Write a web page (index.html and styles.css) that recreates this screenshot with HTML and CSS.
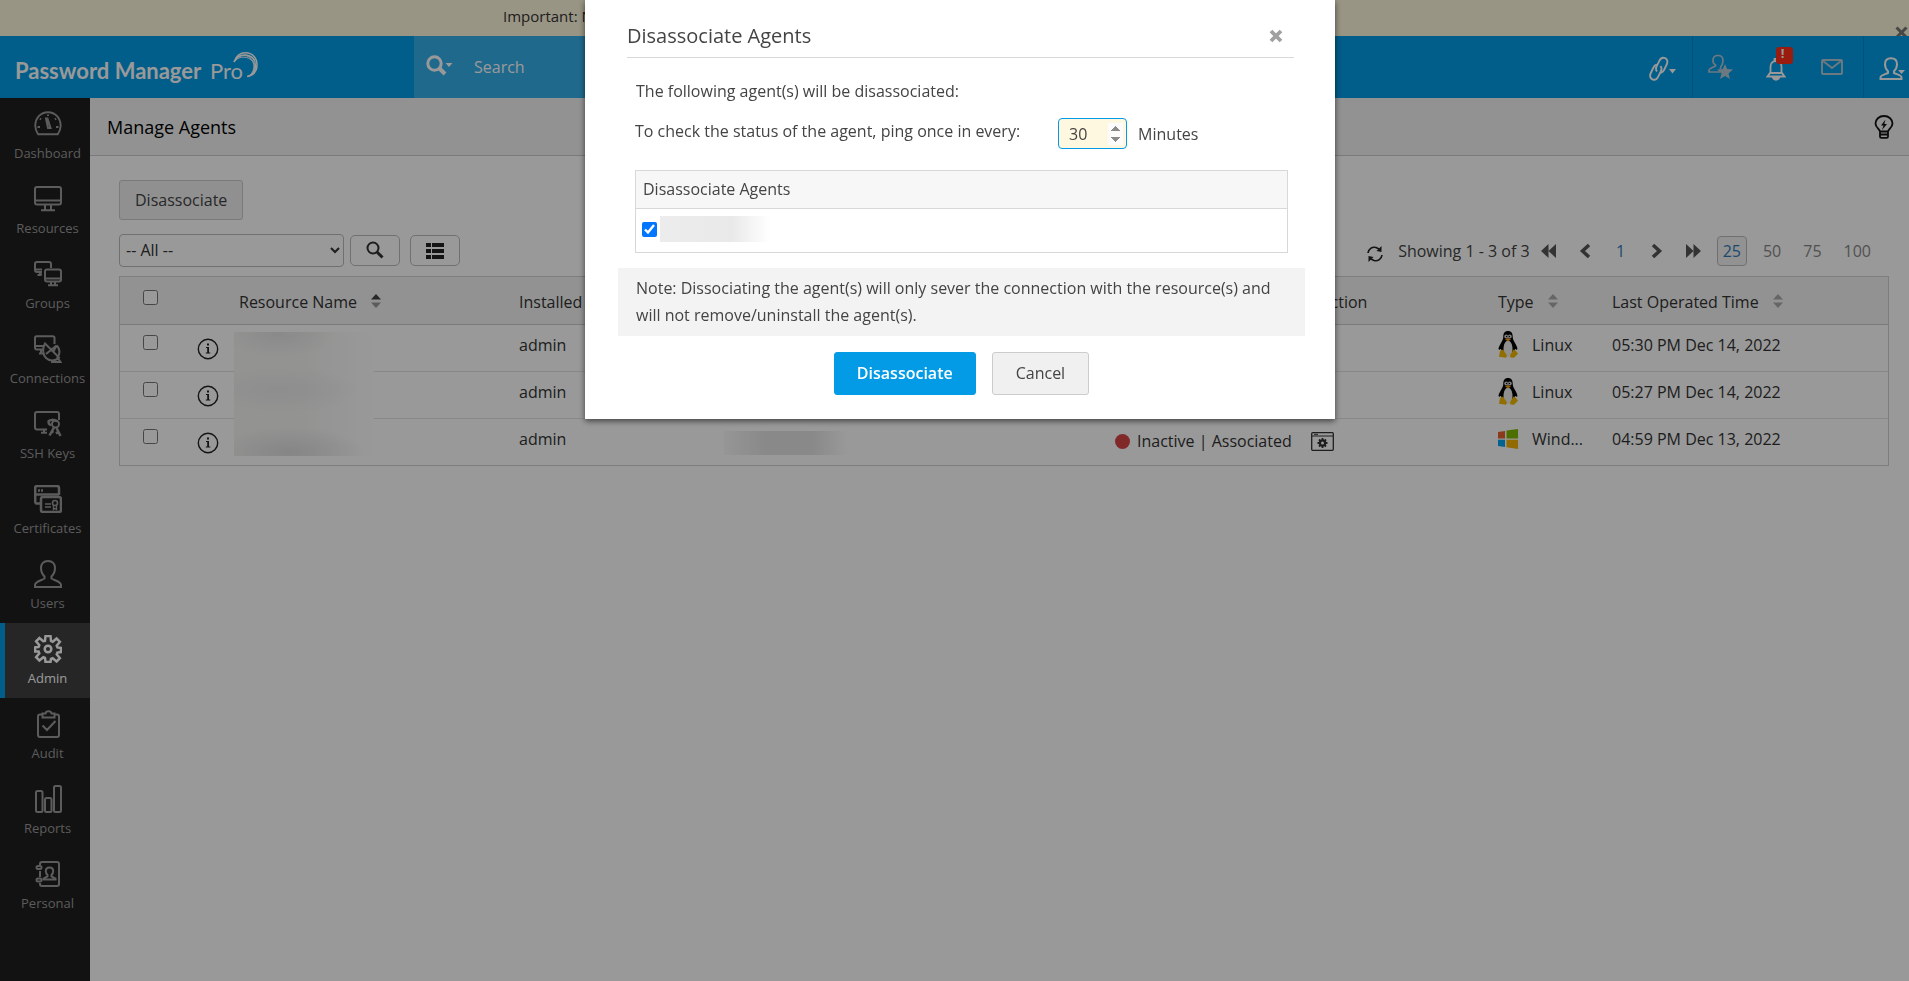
FILE: index.html
```html
<!DOCTYPE html>
<html lang="en">
<head>
<meta charset="utf-8">
<title>Password Manager Pro - Manage Agents</title>
<link rel="stylesheet" href="styles.css">
</head>
<body>
<div class="app">
  <div class="notice">
    <span>Important: N</span>
    <button class="notice-close" aria-label="Close notice">
      <svg width="13" height="13" viewBox="0 0 13 13"><path d="M1.500 1.500l10 10M11.500 1.500l-10 10" stroke="#777" stroke-width="3" fill="none"/></svg>
    </button>
  </div>

  <header class="topbar">
    <a class="logo" href="#"><b>Password Manager</b> <span>Pro</span>
      <svg class="swoosh" width="28" height="28" viewBox="0 0 28 28" fill="none" stroke="#fff"><path d="M2 11C4 5 8 1.800 13.500 1.800c7 0 11.500 5 11.500 12 0 5.500-3 10.500-10 11.800" stroke-width="1.500"/><path d="M2 11C5 5 9 3.500 14 4c6 1 9.500 5 9.500 10.500 0 5-3 9-7.500 11" stroke-width="1.500"/><path d="M2.500 10.500C6 6.500 10 5.500 14.500 6.500 20 8 22.500 12 21.800 17c-.6 4-2.500 6.500-5.300 8.300M4 8C8 3 15 3.500 19 7.500c4 4 4.500 9.500 2 14" stroke-width="1"/></svg>
    </a>
    <div class="search">
      <svg width="28" height="22" viewBox="0 0 28 22"><circle cx="8.500" cy="8.500" r="6.700" fill="none" stroke="#fff" stroke-width="3"/><path d="M13 13l6 6" stroke="#fff" stroke-width="4"/><path d="M19.500 8h7l-3.500 4z" fill="#fff"/></svg>
      <input type="text" placeholder="Search" aria-label="Search">
    </div>
    <div class="tools">
      <button class="tool link" aria-label="Quick links">
        <svg width="28" height="26" viewBox="0 0 28 26" fill="none" stroke="#fff" stroke-width="1.900"><path d="M8 15.500c-1.300-1.500-1.200-3.500-.3-5.300l2.600-5.400C11.600 2 14 1.200 16.200 2.200s2.800 3.600 1.500 6.300l-2.600 5.400c-.9 1.800-2.300 2.900-4.100 2.900"/><path d="M11.500 10c1.300 1.500 1.200 3.500.3 5.300l-2.600 5.400c-1.300 2.800-3.700 3.600-5.900 2.600s-2.800-3.600-1.500-6.300l2.600-5.400C5.300 9.800 6.700 8.700 8.500 8.700"/><path d="M20 13h7l-3.500 4.500z" fill="#fff" stroke="none"/></svg>
      </button>
      <button class="tool star" aria-label="Privileged users">
        <svg width="26" height="26" viewBox="0 0 26 26"><path d="M10 1.500c3 0 5 2 5 5s-1 5-2.500 7v1.500M12 18H1v-2l1.500-1.500 5-2.500v-1C5.500 10 5 8.500 5 6.500c0-3 2-5 5-5" fill="none" stroke="#b4cad7" stroke-width="1.700"/><path d="M17 10l2.200 5 5.800.5-4.500 4 1.500 5.500-5-3-5 3 1.500-5.500-4.500-4 5.800-.5z" fill="#b4cad7"/></svg>
      </button>
      <button class="tool bell" aria-label="Notifications">
        <svg width="20" height="23" viewBox="0 0 20 23" fill="none" stroke="#fff" stroke-width="1.800"><path d="M4.500 14.500V9c0-4 2-6 5.500-6s5.500 2 5.500 6v5.500M4 15h12l2.500 3.500h-17zM8.500 2.500V1h3v1.500"/><path d="M7 20c1 2.500 5 2.500 6 0z" fill="#fff"/></svg>
        <span class="badge">!</span>
      </button>
      <button class="tool mail" aria-label="Messages">
        <svg width="22" height="16" viewBox="0 0 22 16" fill="none" stroke="#b4cad7" stroke-width="1.900"><rect x="1" y="1" width="20" height="14" rx="1"/><path d="M2 2l9 7 9-7"/></svg>
      </button>
      <button class="tool profile" aria-label="Account">
        <svg width="27" height="24" viewBox="0 0 27 24"><path d="M12 1.200c4 0 6 2.500 6 6 0 3-1 5-3 7v1.800c3 1.500 7.500 2 7.500 4.500V22h-21v-1.500c0-2.500 4.500-3 7.500-4.500v-1.800c-2-2-3-4-3-7 0-3.500 2-6 6-6z" fill="none" stroke="#fff" stroke-width="2"/><path d="M19 13h7l-3.500 4z" fill="#fff"/></svg>
      </button>
    </div>
  </header>

  <div class="body">
    <nav class="side">
      <a href="#"><svg viewBox="0 0 28 28"><path d="M3.500 25h21c2-3 3-6 3-9C27.500 8 22 1.500 14 1.500S.5 8 .5 16c0 3 1 6 3 9z" transform="translate(.8 .8) scale(.94)"/><path d="M12 8.500l2 9.500h2.500L13.500 8.500zM14 4.500v1.500M6 8.500l1 1M22 8.500l-1 1M3.500 17h2.500M22 17h2.500"/></svg><span>Dashboard</span></a>
      <a href="#"><svg viewBox="0 0 28 28"><rect x="1" y="2" width="26" height="17.500" rx="2"/><path d="M1 15.500h26M11 20v5M17 20v5M7 25.200h14"/></svg><span>Resources</span></a>
      <a href="#"><svg viewBox="0 0 28 28"><path d="M17 8V4c0-1-.5-2-2-2H3C1.500 2 1 3 1 4v6c0 1 .5 2 2 2h5M1 9.500h7M6 12v3H3.500M8 14.500H6"/><rect x="11" y="9.500" width="16" height="12" rx="2"/><path d="M11 18.500h16M17 22v3M21 22v3M14 25.300h10"/></svg><span>Groups</span></a>
      <a href="#"><svg viewBox="0 0 28 28"><path d="M20.500 9V3c0-1-.5-1.700-1.700-1.700H2.700C1.500 1.300 1 2 1 3v9.500c0 1.300.5 2 1.700 2H9M1 11h9M7 15v3.500M5 18.500h5"/><path d="M11 8.500l14 14c-4 4-10 3.500-13 .5s-4-9-1-14.500zM12 19l10.500-8.500-3.500 7M22.500 10.500c4 3 3.500 9 1 12l3 4.500H17"/></svg><span>Connections</span></a>
      <a href="#"><svg viewBox="0 0 28 28"><path d="M25 10V4c0-1-.5-2-2-2H3C1.500 2 1 3 1 4v13.500c0 1.200.5 2 2 2h10M10 20v2.500M7 22.800h6"/><circle cx="21.500" cy="14" r="3.500"/><path d="M14 12c1.500-2.500 6-3 9-.5M15 11.500c-1 1.500 0 3 2 3.500M20 17.500l-4.500 8M22.500 18l4 8M17 21l2.500 1.500M24 22l-2 1.500" stroke-width="2.500"/></svg><span>SSH Keys</span></a>
      <a href="#"><svg class="heavy" viewBox="0 0 28 28"><path d="M6 18.500H3c-1 0-1.800-.7-1.800-1.800V3c0-1.200.8-2 1.800-2h20c1.200 0 2 .8 2 2v7M1 9.500h24M4 5.500h2M7 5.500h2"/><rect x="7" y="12" width="20" height="15" rx="2"/><path d="M11 19h6M11 22h6" stroke-width="1.600"/><circle cx="21" cy="18" r="2.500" stroke-width="1.600"/><path d="M19.500 20.500v4l1.500-1 1.500 1v-4" stroke-width="1.400"/></svg><span>Certificates</span></a>
      <a href="#"><svg viewBox="0 0 28 28"><path d="M14 1c4.500 0 7 3 7 7 0 3.500-1.500 6.500-3.500 8.500v2c3 2 9.500 3 9.500 6.500v2H1v-2c0-3.500 6.500-4.500 9.500-6.500v-2C8.500 14.500 7 11.500 7 8c0-4 2.500-7 7-7z"/></svg><span>Users</span></a>
      <a href="#" class="on"><svg class="heavy" viewBox="0 0 28 28"><path d="M11.500 1h5l.5 5 1.700.7 3.900-3.200 3.300 3.300-3.200 3.900.7 1.700 3.600.5v4.200l-3.600.5-.7 1.700 3.200 3.900-3.300 3.300-3.900-3.200L17 24l-.5 3h-5l-.5-4-1.700-.7-3.900 3.200-3.300-3.300 3.200-3.900-.7-1.700L1 16.600v-4.200l3.600-.5.700-1.700-3.200-3.900 3.300-3.300 3.900 3.200L11 6z"/><circle cx="14" cy="14" r="3.300"/></svg><span>Admin</span></a>
      <a href="#"><svg viewBox="0 0 28 28"><path d="M8.500 4.500H6C4.500 4.500 4 5.200 4 6.500v18.500c0 1.200.7 2 2 2h17c1.300 0 2-.8 2-2V6.500c0-1.300-.5-2-2-2h-2.500M8.500 3.500h3C12 .5 17 .5 17.500 3.500h3v4h-12zM8.500 15.500l4.500 4.500 8.500-9"/></svg><span>Audit</span></a>
      <a href="#"><svg viewBox="0 0 28 28"><rect x="2" y="6" width="6.500" height="21" rx="1.500"/><rect x="11" y="13" width="6.500" height="14" rx="1.500"/><rect x="20" y="1" width="7" height="26" rx="1.500"/></svg><span>Reports</span></a>
      <a href="#"><svg viewBox="0 0 28 28"><path d="M6 5V4c0-1.200.5-2 2-2h15c1.300 0 2 .8 2 2v20c0 1.300-.7 2-2 2H8c-1.500 0-2-.7-2-2v-1M6 11v6"/><rect x="2.500" y="6" width="5" height="3" rx="1.500"/><rect x="2.500" y="18.500" width="5" height="3" rx="1.500"/><path d="M15.500 7.500c2.500 0 3.700 1.500 3.700 3.500s-.7 3-1.700 4v1.500l4 2v1h-12v-1l4-2V15c-1-1-1.700-2-1.700-4s1.200-3.500 3.700-3.500z"/></svg><span>Personal</span></a>
    </nav>

    <main class="main">
      <div class="pagehead">
        <h1>Manage Agents</h1>
        <button class="plain" aria-label="Help tips"><svg width="20" height="24" viewBox="0 0 20 24" fill="none" stroke="#111" stroke-width="1.800"><path d="M6 16.500C5.500 14 1.500 12.500 1.500 8.500S5 1 10 1s8.500 3.500 8.500 7.500-4 5.500-4.500 8zM6 16.500v5c0 1 .5 1.300 1.300 1.300h5.400c.8 0 1.300-.3 1.300-1.300v-5M6 19.500h8"/><path d="M11.500 4.500L7 10.500h2.500L8 15l5-6h-2.700z" fill="#111" stroke="none"/></svg></button>
      </div>

      <div class="content">
        <button class="btn">Disassociate</button>
        <div class="filters">
          <select aria-label="Filter agents"><option>-- All --</option></select>
          <button class="iconbtn" aria-label="Search agents"><svg width="18" height="18" viewBox="0 0 18 18" fill="none" stroke="#333"><circle cx="7" cy="7" r="5.500" stroke-width="2"/><path d="M11 11l5.500 5.500" stroke-width="3"/></svg></button>
          <button class="iconbtn list" aria-label="Choose columns"><svg width="18" height="16" viewBox="0 0 18 16" fill="#222"><path d="M0 0h5v4H0zM6 0h12v4H6zM0 6h5v4H0zM6 6h12v4H6zM0 12h5v4H0zM6 12h12v4H6z"/></svg></button>
          <div class="pager">
            <button class="plain refresh" aria-label="Refresh"><svg width="16" height="18" viewBox="0 0 16 18" fill="none" stroke="#222" stroke-width="1.700"><path d="M1 8c.5-4 4-6.500 8-5.500l3 1.500M15 10c-.5 4-4 6.500-8 5.500l-3-1.500"/><path d="M14.500 1v6L9.500 6zM1.500 17v-6l5 1z" fill="#222" stroke="none"/></svg></button>
            <span class="showing">Showing 1 - 3 of 3</span>
            <button class="plain nav" aria-label="First page"><svg width="16" height="14" viewBox="0 0 16 14"><path d="M7.500 0v14L0 7zM15 0v14L7.500 7z" fill="#555"/></svg></button>
            <button class="plain nav" aria-label="Previous page"><svg width="16" height="14" viewBox="0 0 16 14"><path d="M12 1L5.500 7l6.500 6" fill="none" stroke="#555" stroke-width="3.500"/></svg></button>
            <a class="nav" href="#">1</a>
            <button class="plain nav" aria-label="Next page"><svg width="16" height="14" viewBox="0 0 16 14"><path d="M4 1l6.500 6L4 13" fill="none" stroke="#555" stroke-width="3.500"/></svg></button>
            <button class="plain nav" aria-label="Last page"><svg width="16" height="14" viewBox="0 0 16 14"><path d="M1 0v14l7.500-7zM8.500 0v14L16 7z" fill="#555"/></svg></button>
            <a class="size on" href="#">25</a>
            <a class="size" href="#">50</a>
            <a class="size" href="#">75</a>
            <a class="size" href="#">100</a>
          </div>
        </div>

        <div class="gridwrap">
          <table class="grid">
            <colgroup><col class="c-check"><col class="c-info"><col class="c-name"><col class="c-by"><col><col class="c-status"><col class="c-action"><col class="c-type"><col class="c-time"></colgroup>
            <thead>
              <tr>
                <th><input type="checkbox" aria-label="Select all"></th><th></th>
                <th>Resource Name<svg class="sort" width="10" height="14" viewBox="0 0 10 14"><path d="M0 5.500L5 0l5 5.500z" fill="#444"/><path d="M0 8.500h10L5 14z" fill="#999"/></svg></th>
                <th>Installed By</th><th></th><th></th><th>Agent Action</th>
                <th>Type<svg class="sort" width="10" height="14" viewBox="0 0 10 14"><path d="M0 5.500L5 0l5 5.500zM0 8.500h10L5 14z" fill="#aaa"/></svg></th>
                <th>Last Operated Time<svg class="sort" width="10" height="14" viewBox="0 0 10 14"><path d="M0 5.500L5 0l5 5.500zM0 8.500h10L5 14z" fill="#aaa"/></svg></th>
              </tr>
            </thead>
            <tbody>
              <tr>
                <td><input type="checkbox" aria-label="Select agent 1"></td>
                <td class="info"><svg width="22" height="22" viewBox="0 0 22 22"><use href="#info"/></svg></td>
                <td></td><td>admin</td><td></td><td></td><td></td>
                <td><span class="os"><svg width="20" height="27" viewBox="0 0 20 27"><use href="#tux"/></svg>Linux</span></td>
                <td>05:30 PM Dec 14, 2022</td>
              </tr>
              <tr>
                <td><input type="checkbox" aria-label="Select agent 2"></td>
                <td class="info"><svg width="22" height="22" viewBox="0 0 22 22"><use href="#info"/></svg></td>
                <td></td><td>admin</td><td></td><td></td><td></td>
                <td><span class="os"><svg width="20" height="27" viewBox="0 0 20 27"><use href="#tux"/></svg>Linux</span></td>
                <td>05:27 PM Dec 14, 2022</td>
              </tr>
              <tr>
                <td><input type="checkbox" aria-label="Select agent 3"></td>
                <td class="info"><svg width="22" height="22" viewBox="0 0 22 22"><use href="#info"/></svg></td>
                <td></td><td>admin</td>
                <td class="low host"><div class="mask mask-host"></div></td>
                <td colspan="2" class="low"><span class="status"><i class="dot"></i>Inactive | Associated
                  <svg width="23" height="19" viewBox="0 0 23 19" fill="none" stroke="#333"><rect x=".7" y=".7" width="21.600" height="17.600" rx="1" stroke-width="1.300"/><path d="M1 4h21M3 2.300h4"/><circle cx="11.500" cy="11" r="2.600" stroke-width="2.200"/><path d="M11.500 6v2M11.500 14v2M6.500 11h2M14.500 11h2M8 7.500l1.300 1.300M15 7.500l-1.300 1.300M8 14.500l1.300-1.300M15 14.500l-1.300-1.300" stroke-width="1.800"/></svg></span></td>
                <td><span class="os"><svg width="20" height="20" viewBox="0 0 20 20"><path d="M0 3l7-1v7.500H0z" fill="#e8622c"/><path d="M8.500 1.500L20 0v9.500H8.500z" fill="#7fba00"/><path d="M0 10.800h7V18l-7-1z" fill="#00a4ef"/><path d="M8.500 10.800H20V20L8.500 18.300z" fill="#f2b200"/></svg>Wind...</span></td>
                <td>04:59 PM Dec 13, 2022</td>
              </tr>
            </tbody>
          </table>
          <div class="mask mask-names"></div>
        </div>
      </div>
    </main>
  </div>
</div>

<svg class="defs" width="0" height="0">
  <symbol id="info" viewBox="0 0 22 22"><circle cx="11" cy="11" r="9.700" fill="none" stroke="#222" stroke-width="1.400"/><path d="M10 5.500h2v2h-2zM9 9h3v5.500h1.300v1H8.800v-1h1.400V10H9z" fill="#222"/></symbol>
  <symbol id="tux" viewBox="0 0 20 27"><path d="M10 0c3.200 0 4.700 2.200 4.700 5.500 0 2.500.8 4 2.300 6.500s3 5.500 2.200 6.500c-.7.700-1.700-.5-2.200-.5L15 24H5l-2-6c-.5 0-1.500 1.200-2.200.5C0 17.500 1.500 14.500 3 12s2.300-4 2.300-6.500C5.300 2.200 6.800 0 10 0z" fill="#000"/><path d="M10 9.500c2.500 0 4.500 4 4.500 8.500s-1.500 8-4.500 8-4.500-3.500-4.500-8 2-8.500 4.500-8.500z" fill="#eee"/><circle cx="8.200" cy="5.500" r="1.900" fill="#ddd"/><circle cx="11.800" cy="5.500" r="1.900" fill="#ddd"/><circle cx="8.600" cy="5.500" r=".8"/><circle cx="11.400" cy="5.500" r=".8"/><path d="M7 8.200L10 7l3 1.200-3 2.300z" fill="#f39c12"/><path d="M2 20l3-1.500 4 6-1 2.200-7-.9zM18 20l-2.500-1.500-3.500 6 .5 2 3.500.3 4-4z" fill="#f2b800"/></symbol>
</svg>

<div class="shade">
  <section class="modal" role="dialog" aria-modal="true" aria-labelledby="dlg-title">
    <div class="modal-head">
      <h2 id="dlg-title">Disassociate Agents</h2>
      <button class="plain" aria-label="Close"><svg width="14" height="14" viewBox="0 0 14 14"><path d="M2 2l10 10M12 2L2 12" stroke="#a0a0a0" stroke-width="3.800" fill="none"/></svg></button>
    </div>
    <div class="modal-body">
      <p>The following agent(s) will be disassociated:</p>
      <div class="ping">
        <label for="ping">To check the status of the agent, ping once in every:</label>
        <input id="ping" type="number" value="30">
        <span>Minutes</span>
      </div>
      <table class="picked">
        <thead><tr><th>Disassociate Agents</th></tr></thead>
        <tbody><tr><td><div class="pick"><input type="checkbox" checked aria-label="Agent"><div class="mask mask-pick"></div></div></td></tr></tbody>
      </table>
    </div>
    <p class="note">Note: Dissociating the agent(s) will only sever the connection with the resource(s) and will not remove/uninstall the agent(s).</p>
    <div class="actions">
      <button class="btn primary">Disassociate</button>
      <button class="btn cancel">Cancel</button>
    </div>
  </section>
</div>
</body>
</html>
```
FILE: styles.css
```css
* { box-sizing: border-box; }
body { margin: 0; font: 16px/24px "Open Sans", "Noto Sans", sans-serif; color: #333; background: #fff; overflow: hidden; }
button, input, select { font: inherit; color: inherit; }
button { cursor: pointer; }
svg { display: block; flex: none; }
a { color: inherit; text-decoration: none; }
h1, h2, p { margin: 0; font-weight: 400; }
.plain { border: 0; background: none; padding: 0; }
.defs { position: absolute; }

.app { min-height: 100vh; display: flex; flex-direction: column; }
.notice { position: relative; height: 36px; background: #fff8dc; padding: 4px 0 0 503px; font-size: 15px; }
.notice-close { position: absolute; right: 1px; top: 26px; height: 10px; overflow: hidden; padding: 0; border: 0; background: none; }

.topbar { height: 62px; background: #039be5; display: flex; }
.logo { position: relative; width: 414px; padding: 21px 0 0 15px; font: 22px/28px Lato, sans-serif; color: #fff; }
.logo span { margin-left: 3px; }
.swoosh { position: absolute; left: 232px; top: 15px; }
.search { background: #35afea; width: 370px; display: flex; align-items: center; gap: 20px; padding: 0 0 0 12px; }
.search svg { margin-bottom: 2px; }
.search input { border: 0; outline: 0; background: none; color: #fff; padding: 0; }
.search input::placeholder { color: #fff; opacity: 1; }
.tools { margin-left: auto; display: flex; }
.tool { position: relative; height: 62px; border: 0; background: none; padding: 4px 0 0; display: flex; align-items: center; }
.link { width: 43px; }
.star { width: 74px; padding-left: 15px; border-left: 1px solid #0288c9; padding-top: 0; }
.bell { width: 55px; }
.mail { width: 42px; padding-top: 0; }
.profile { width: 46px; padding-left: 15px; border-left: 1px solid #0288c9; }
.badge { position: absolute; left: 10px; top: 11px; width: 17px; height: 17px; padding-right: 4px; border-radius: 3px; background: #ff3018; color: #fff; font-size: 13px; line-height: 13px; font-weight: 700; text-align: center; }

.body { flex: 1; display: flex; }
.side { width: 90px; background: #1f1f1f; }
.side a { display: flex; flex-direction: column; align-items: center; gap: 5px; height: 75px; padding: 12px 0 0; border-left: 5px solid transparent; font-size: 13px; line-height: 20px; color: #999; }
.side svg { width: 28px; height: 28px; fill: none; stroke: currentColor; stroke-width: 2; }
.side svg.heavy { stroke-width: 2.500; }
.side span { white-space: nowrap; }
.side .on { background: #404040; border-color: #039be5; color: #fff; }

.main { flex: 1; min-width: 0; }
.pagehead { display: flex; justify-content: space-between; align-items: center; height: 58px; padding: 0 15px 0 17px; background: #f4f4f4; border-bottom: 1px solid #ccc; }
h1 { font-size: 18px; color: #000; }
.content { padding: 24px 20px 0 29px; }
.btn { height: 40px; padding: 0 15px; border: 1px solid #ccc; border-radius: 3px; background: #f0f0f0; color: #444; }
.filters { display: flex; align-items: center; margin-top: 12px; height: 36px; }
.filters select { width: 225px; height: 33px; padding: 0 2px; margin-right: 6px; border: 1px solid #bbb; border-radius: 4px; background: #fff; color: #333; }
.iconbtn { display: flex; align-items: center; justify-content: center; width: 50px; height: 31px; margin-right: 10px; padding: 0; border: 1px solid #bbb; border-radius: 5px; background: #fff; }
.iconbtn.list { padding-top: 2px; }
.pager { margin-left: auto; display: flex; align-items: center; color: #444; padding-top: 2px; }
.refresh { margin-right: 15px; padding-top: 5px; }
.showing { margin-right: 1px; }
.nav { width: 36px; display: flex; justify-content: center; }
a.nav { color: #337ab7; }
.size { padding: 2px 5px; margin-right: 10px; border: 1px solid transparent; border-radius: 4px; color: #888; }
.size.on { border-color: #bbb; background: #f4f4f4; color: #337ab7; margin-left: 6px; }
.size:last-child { margin-right: 12px; }

.gridwrap { position: relative; margin-top: 8px; border: 1px solid #d0d0d0; }
.grid { width: 100%; table-layout: fixed; border-collapse: collapse; }
.grid th { height: 47px; padding: 3px 0 0; background: #f4f4f4; border-bottom: 1px solid #ccc; font-weight: 400; text-align: left; white-space: nowrap; }
.grid td { height: 47px; padding: 0 0 6px; border-bottom: 1px solid #e2e2e2; white-space: nowrap; }
.grid tr:last-child td { border-bottom: 0; }
.c-check { width: 77px; } .c-info { width: 42px; } .c-name { width: 280px; } .c-by { width: 205px; }
.c-status { width: 158px; } .c-action { width: 225px; } .c-type { width: 114px; } .c-time { width: 276px; }
.grid input { display: block; width: 15px; height: 15px; margin: 0 0 8px 23px; }
.grid td input { margin-bottom: 4px; }
.grid td.info { padding: 2px 0 0; }
.grid td.low { padding: 0 0 1px; }
.grid td.host { padding-top: 4px; }
.sort { display: inline-block; margin-left: 14px; }
.os { display: flex; align-items: center; gap: 14px; height: 27px; }
.status { display: flex; align-items: center; gap: 7px; }
.status svg { margin-left: 12px; }
.dot { width: 15px; height: 15px; border-radius: 50%; background: #d84545; }

.mask-names { position: absolute; left: 114px; top: 55px; width: 140px; height: 124px; background: radial-gradient(ellipse 55px 24px at 45px 2px, #e6e6e6, #ebebeb00), radial-gradient(ellipse 80px 24px at 45px 58px, #ececec, #efefef00), radial-gradient(ellipse 75px 26px at 55px 120px, #dfdfdf, #e4e4e400), linear-gradient(90deg, #f6f6f4 50%, #fff); }
.mask-host { width: 145px; height: 24px; background: linear-gradient(90deg, #fafafa, #e4e4e4 30%, #e4e4e4 60%, #fff 85%); }
.mask-pick { width: 110px; height: 26px; background: linear-gradient(90deg, #ececec, #e9e9e9 65%, #fff); }

.shade { position: fixed; inset: 0; background: rgba(0, 0, 0, .4); display: flex; justify-content: center; align-items: flex-start; padding-left: 11px; }
.modal { width: 750px; background: #fff; color: #444; padding: 14px 30px 24px 33px; box-shadow: 0 2px 6px rgba(0, 0, 0, .6); }
.modal-head { display: flex; justify-content: space-between; align-items: center; height: 44px; margin: 0 11px 0 9px; padding: 0 11px 0 0; border-bottom: 1px solid #d8d8d8; }
h2 { font-size: 20px; line-height: 28px; }
.modal-body { padding: 21px 17px 0 17px; }
.modal-body p { padding-left: 1px; }
.ping { display: flex; align-items: center; margin-top: 15px; }
.ping label { padding-bottom: 6px; }
.ping input { width: 69px; height: 31px; margin: 0 11px 0 38px; padding: 0 3px 0 10px; border: 1px solid #039be5; border-radius: 4px; outline: 0; background: #fdf8df; }
.ping input::-webkit-inner-spin-button { opacity: 1; height: 22px; }
.picked { width: 100%; margin-top: 21px; border-collapse: collapse; }
.picked th, .picked td { border: 1px solid #d8d8d8; padding: 0 7px 2px; height: 38px; text-align: left; font-weight: 400; }
.picked th { background: #f7f7f7; }
.picked td { height: 44px; padding: 0 6px 3px; }
.pick { display: flex; align-items: center; gap: 3px; }
.pick input { width: 15px; height: 15px; margin: 0; }
.note { margin-top: 15px; padding: 7px 17px 7px 18px; background: #f3f3f3; line-height: 27px; }
.actions { display: flex; justify-content: center; gap: 16px; margin-top: 16px; }
.actions .btn { height: 43px; padding: 0 23px 2px; }
.actions .primary { padding: 0 22px 2px; background: #039be5; border-color: #039be5; color: #fff; font-weight: 600; }
```
